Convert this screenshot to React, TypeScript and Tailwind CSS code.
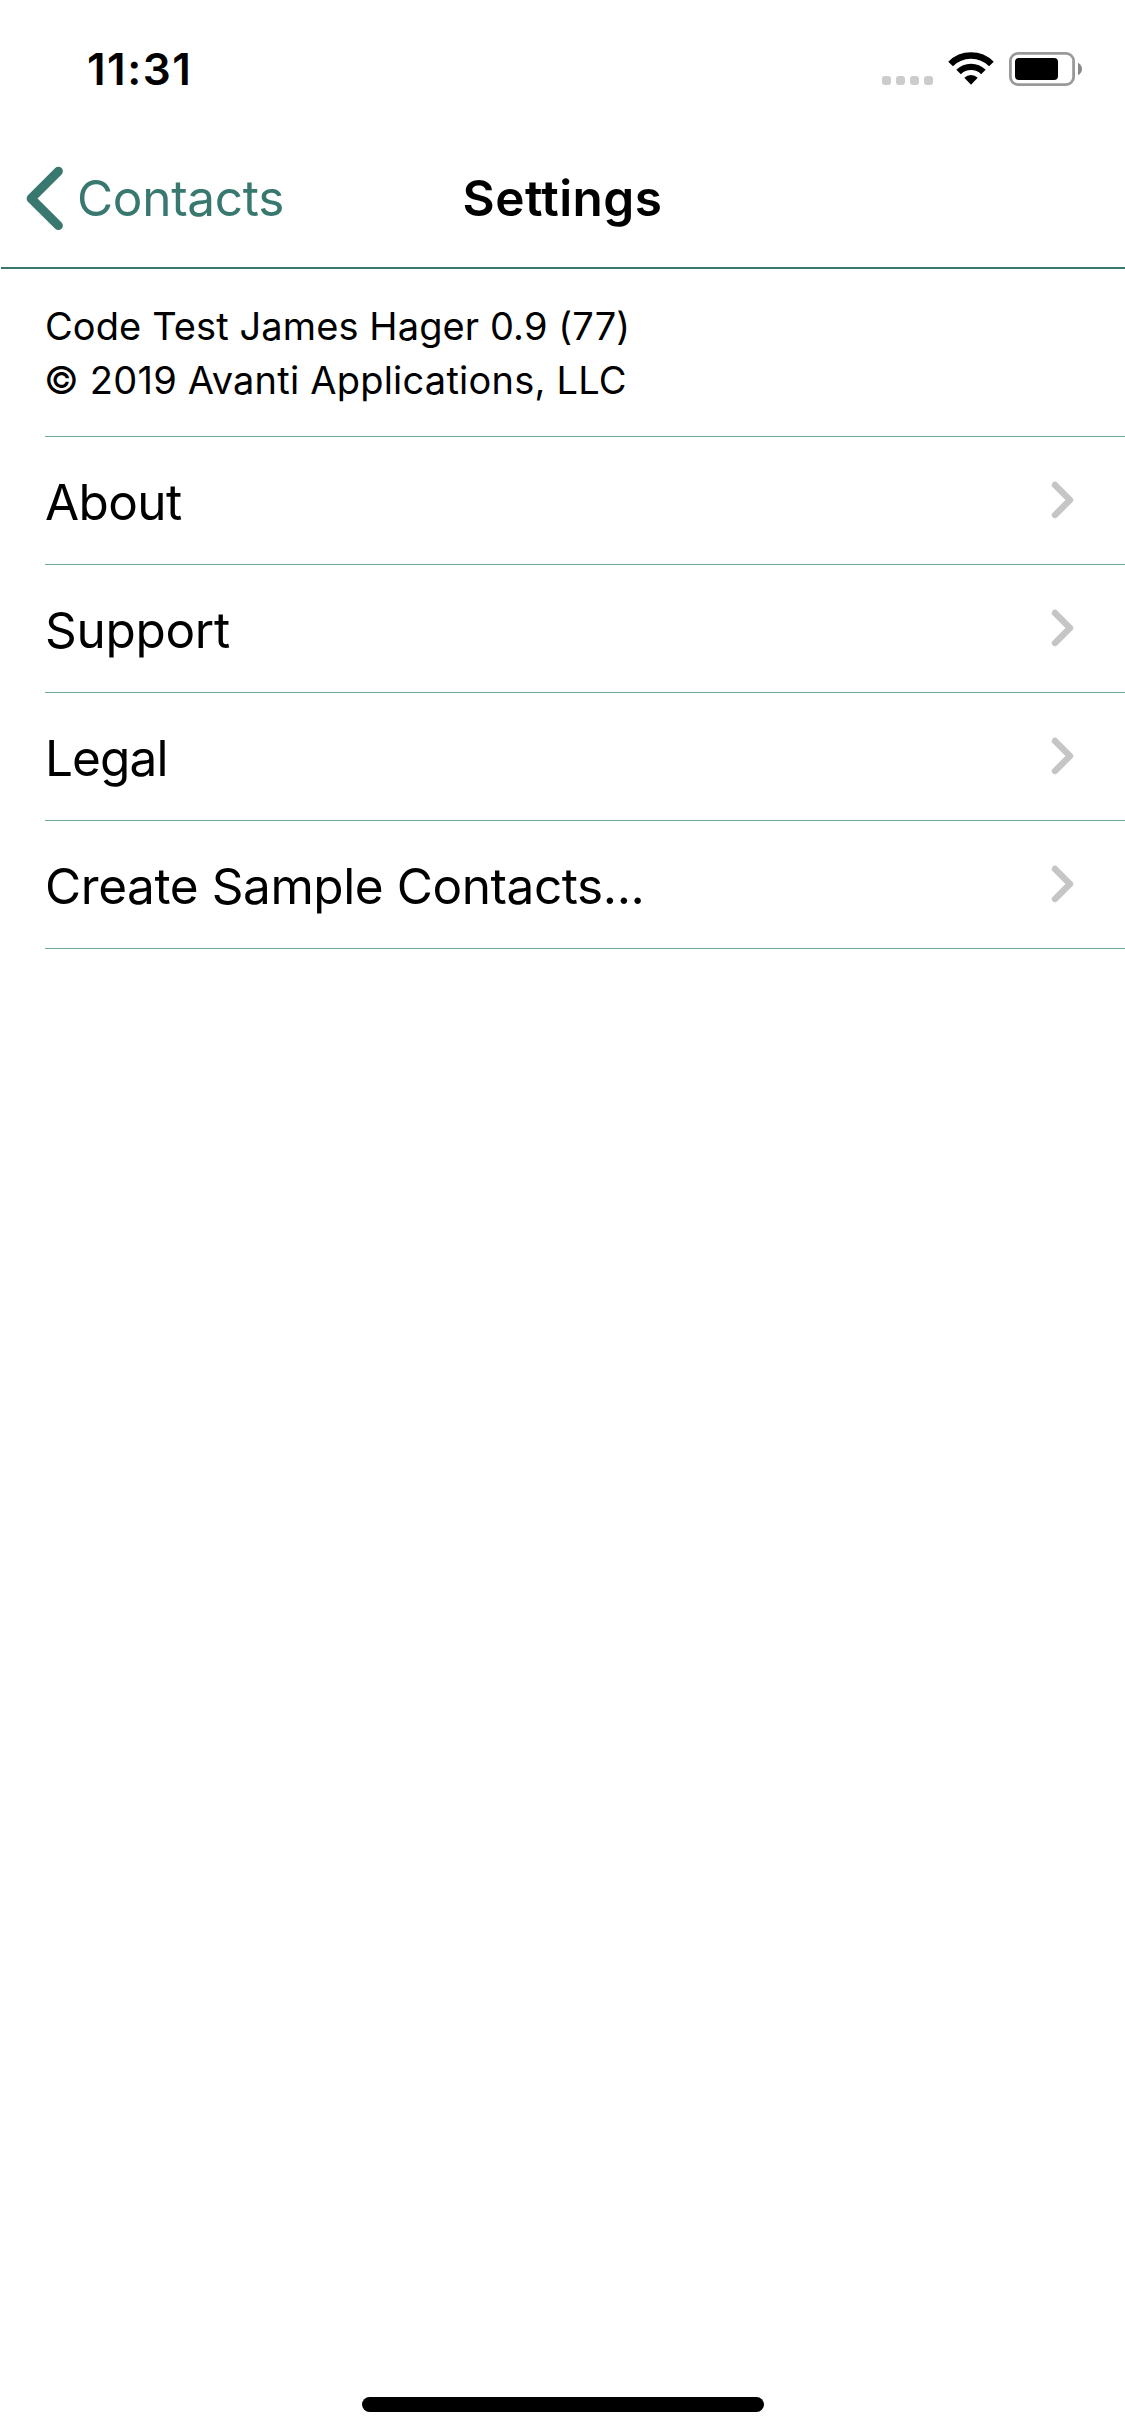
type Row = { label: string; text: string };

const rows: Row[] = [
  { label: "About", text: "-ml-px tracking-[-0.6px]" },
  { label: "Support", text: "-ml-px tracking-[-0.3px]" },
  { label: "Legal", text: "-ml-px tracking-[-0.9px]" },
  { label: "Create Sample Contacts...", text: "-ml-px tracking-[-0.42px]" },
];

function SignalDots() {
  return (
    <div className="mt-[34px] flex gap-[5px]">
      {[0, 1, 2, 3].map((i) => (
        <span key={i} className="size-[9px] rounded-[3px] bg-[#cccccc]" />
      ))}
    </div>
  );
}

function WifiIcon() {
  return (
    <svg className="mt-[9px] ml-[14px] h-[35px] w-[48px]" viewBox="947 51 48 35" fill="none">
      <path d="M950.6 64A28.8 28.8 0 0 1 991.4 64" stroke="#000" strokeWidth="6.6" />
      <path d="M958.6 72A17.5 17.5 0 0 1 983.4 72" stroke="#000" strokeWidth="6.4" />
      <path d="M964.3 77.8A9.6 9.6 0 0 1 977.7 77.8L971 84.8Z" fill="#000" />
    </svg>
  );
}

function BatteryIcon() {
  return (
    <svg className="mt-[9px] ml-[13px] h-[36px] w-[76px]" viewBox="1008 51 76 36" fill="none">
      <rect x="1010.4" y="53.4" width="63.2" height="31.2" rx="7.6" stroke="#999" strokeWidth="2.8" />
      <rect x="1015" y="58" width="43" height="22" rx="4" fill="#000" />
      <path d="M1078 62.7Q1082 65 1082 69Q1082 73 1078 75.3Z" fill="#888" />
    </svg>
  );
}

export default function App() {
  return (
    <div className="flex h-[2436px] w-[1125px] flex-col bg-white font-['Inter','Liberation_Sans',sans-serif] text-black">
      <div className="flex h-[132px] items-start justify-between pt-[42px] pr-[41px] pl-[87px]">
        <time className="text-[44px] leading-[54px] font-semibold tracking-[1.5px]">11:31</time>
        <div className="flex items-start">
          <SignalDots />
          <WifiIcon />
          <BatteryIcon />
        </div>
      </div>

      <header className="ml-px grid h-[137px] grid-cols-3 items-start border-b-2 border-[#38786e] pt-[36px] text-[49.5px] leading-[60px]">
        <button className="flex items-start pl-[24px] text-[#38786e]">
          <svg className="-mt-[3px] h-[68px] w-[42px] shrink-0" viewBox="25 165 42 68" fill="none">
            <path d="M58.4 171.3L31.1 198.5L58.4 225.6" stroke="currentColor" strokeWidth="9" strokeLinecap="round" strokeLinejoin="round" />
          </svg>
          <span className="ml-[10px] tracking-[-0.3px]">Contacts</span>
        </button>
        <h1 className="-ml-px text-center font-semibold tracking-[0.45px]">Settings</h1>
      </header>

      <main className="ml-[45px]">
        <section className="h-[168px] border-b border-[#74a596] pt-[30px] text-[38px] leading-[54px]">
          <p className="tracking-[0.1px]">Code Test James Hager 0.9 (77)</p>
          <p className="-ml-px tracking-[0.22px]">© 2019 Avanti Applications, LLC</p>
        </section>
        <ul>
          {rows.map((row) => (
            <li
              key={row.label}
              className="flex h-[128px] items-start justify-between border-b border-[#74a596] pt-[35px] pr-[50px] pl-px text-[49.5px] leading-[60px]"
            >
              <span className={row.text}>{row.label}</span>
              <svg className="mt-[8px] h-[40px] w-[25px]" viewBox="1050 480 25 40" fill="none">
                <path d="M1055 485L1070 500L1055 515" stroke="#c5c5c7" strokeWidth="6.4" strokeLinecap="round" strokeLinejoin="round" />
              </svg>
            </li>
          ))}
        </ul>
      </main>

      <div className="mt-auto mb-[24px] ml-[362px] h-[15px] w-[402px] rounded-full bg-black" />
    </div>
  );
}
